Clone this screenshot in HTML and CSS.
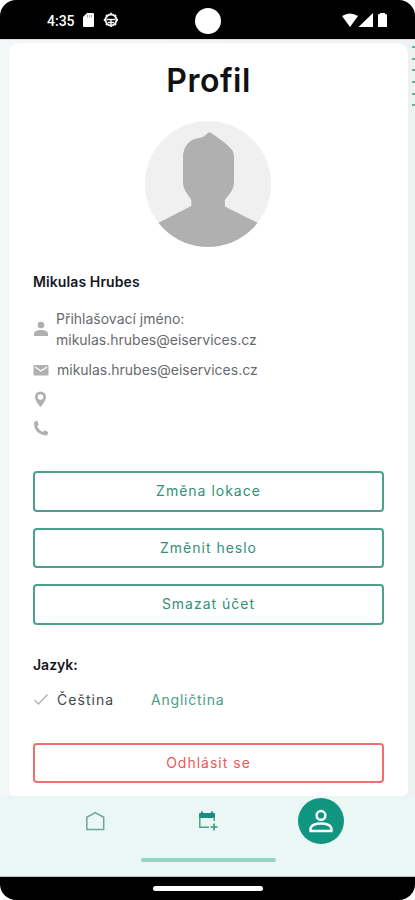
FILE: index.html
```html
<!DOCTYPE html>
<html lang="cs">
<head>
<meta charset="utf-8">
<title>Profil</title>
<link rel="stylesheet" href="styles.css">
</head>
<body>
<div class="phone">
  <header class="status">
    <div class="status-left">
      <span class="clock">4:35</span>
      <svg class="sd" viewBox="0 0 11 14"><path fill="#fff" d="M4 0h6q1 0 1 1v12q0 1-1 1H1q-1 0-1-1V4z"/><path stroke="#aaa" d="M4.500 2v2.500M6.500 2v2.500M8.500 2v2.500"/></svg>
      <svg class="debug" viewBox="0 0 16 16" fill="none" stroke="#f4f4f4"><circle cx="8" cy="8" r="5.500" stroke-width="2"/><path stroke-width="1.800" d="M8 .8v2M8 13v2M.8 8h2M13 8h2M3 3l1 1M13 3l-1 1M3 13l1-1M13 13l-1-1"/><path stroke-width="1.400" d="M4 7.500h8M8 8v5M5 10.500h6"/></svg>
    </div>
    <span class="camera"></span>
    <svg class="signals" viewBox="0 0 46 14" fill="#fff"><path d="M0 3q8-5 16 0L8 14z"/><path d="M31 0v14H16.500z"/><path d="M36 2q0-1 2-1V0h5v1q2 0 2 1v12h-9z"/></svg>
  </header>
  <main class="screen">
    <div class="dots"><i></i><i></i><i></i><i></i><i></i><i></i></div>
    <section class="card">
      <h1>Profil</h1>
      <svg class="avatar" viewBox="0 0 126 126"><defs><clipPath id="round"><circle cx="63" cy="63" r="63"/></clipPath></defs><g clip-path="url(#round)"><path fill="#f0f0f0" d="M0 0h126v126H0z"/><path fill="#b0b0b0" d="M64.300 11q3.500 2 7 4.500 9 6 15 12.500 2.700 3 2.700 7v26.500q0 5-2.700 9l-6.400 8.500v6.500L113 102v24H13v-24l33.300-17v-6l-6-9q-2.300-4-2.300-8.500V35q.5-7 4.300-12 3-3.500 7.300-5l8.400-2q3.300-2.500 6.300-5z"/></g></svg>
      <h2 class="name">Mikulas Hrubes</h2>
      <ul class="details">
        <li class="login"><svg viewBox="0 0 16 16"><circle cx="8" cy="4" r="3.300"/><path d="M1 15v-2q0-4 7-4t7 4v2z"/></svg><span><span class="label">Přihlašovací jméno:</span><br><span class="value">mikulas.hrubes@eiservices.cz</span></span></li>
        <li class="mail"><svg viewBox="0 0 16 16"><rect x=".5" y="3" width="15" height="10.500" rx="1"/><path fill="none" stroke="#fff" stroke-width="1.200" d="M2 5l6 4 6-4"/></svg><span class="value">mikulas.hrubes@eiservices.cz</span></li>
        <li><svg viewBox="0 0 16 16"><path fill-rule="evenodd" d="M7.500.500a5.500 5.500 0 0 0-5.500 5.500c0 4 5.500 10 5.500 10S13 10 13 6A5.500 5.500 0 0 0 7.500.500zm0 2.700a2.800 2.800 0 1 1 0 5.600 2.800 2.800 0 0 1 0-5.600z"/></svg></li>
        <li><svg viewBox="0 0 16 16"><path d="M1 2.500L3.300.800q1 0 1.300.700l1 2.700q0 .8-.6 1.100L4.200 6.500q2 3.700 5.600 5.400l1.100-1.100q.5-.5 1.200-.2l2.500 1.200q.7.500.5 1.200l-1 1.900q-.3.500-1 .500Q1 14 1 2.500z"/></svg></li>
      </ul>
      <div class="actions">
        <button class="lokace"><span>Změna lokace</span></button>
        <button class="heslo"><span>Změnit heslo</span></button>
        <button class="ucet"><span>Smazat účet</span></button>
      </div>
      <h2 class="lang-title">Jazyk:</h2>
      <div class="languages">
        <svg viewBox="0 0 16 16"><path fill="none" stroke="#b0b0b0" stroke-width="1.300" d="M1.500 9l4 4L14.500 3.500"/></svg>
        <span class="current">Čeština</span><a class="other">Angličtina</a>
      </div>
      <button class="logout"><span>Odhlásit se</span></button>
    </section>
  </main>
  <nav class="tabs">
    <div class="tab-row">
      <svg class="home" viewBox="0 0 20 20"><path fill="none" stroke="#6ba899" stroke-width="1.500" d="M1.800 18.500V6.300L10.200 1.500l8.500 4.800v12.200z"/></svg>
      <svg class="calendar" viewBox="0 0 20 20"><path fill="#188f78" d="M1 3q0-1 1-1h1V.500h2V2h8V.500h2V2h1q1 0 1 1v4H1z"/><path fill="none" stroke="#4ba18e" stroke-width="1.500" d="M1.800 6v10.200H11M16.200 6v4"/><path fill="none" stroke="#359883" stroke-width="1.600" d="M16 12.500v7M12.500 16h7"/></svg>
      <span class="profile"><svg viewBox="0 0 24 24" fill="none" stroke="#fff" stroke-width="2.400"><circle cx="11.500" cy="6.200" r="4.200"/><path d="M1.500 21v-2.800Q3.500 14 11.500 14t10 4.200V21z"/></svg></span>
    </div>
    <span class="scrollbar"></span>
  </nav>
  <footer class="gesture"><span></span></footer>
</div>
</body>
</html>
```

FILE: styles.css
```css
* { box-sizing: border-box; }
body { margin: 0; background: #fff; font-family: Inter, "Liberation Sans", sans-serif; }
.phone { width: 415px; height: 900px; display: flex; flex-direction: column; overflow: hidden; }
.status { height: 39px; flex: none; background: #000; border-radius: 16px 16px 0 0; display: grid; grid-template-columns: 195px 26px 1fr; color: #fff; }
.status-left { display: flex; padding: 12px 0 0 47px; }
.clock { width: 36px; font: 500 14px/18px Roboto, sans-serif; }
.sd { width: 11px; height: 14px; margin-top: 1px; }
.debug { width: 16px; height: 16px; margin-left: 9px; }
.camera { width: 26px; height: 26px; border-radius: 50%; background: #fff; margin-top: 8px; }
.signals { width: 46px; height: 14px; margin: 13px 0 0 121px; }
.screen { height: 757px; flex: none; position: relative; padding: 3px 7px 0 9px; background: linear-gradient(90deg, #f4f7f8, #edf1f1); border-top: 1px solid #ddd; }
.dots { position: absolute; right: 0; top: 6px; display: grid; gap: 9.700px; }
.dots i { width: 3px; height: 2px; background: #61b3a1; }
.card { height: 753px; background: #fff; border-radius: 10px 10px 6px 6px; padding: 19px 24px 0; display: flex; flex-direction: column; }
h1, h2, ul { margin: 0; padding: 0; }
h1 { height: 40px; font-size: 32px; line-height: 38px; font-weight: 600; text-align: center; color: #111; letter-spacing: .5px; white-space: nowrap; }
.avatar { width: 126px; height: 126px; align-self: center; margin: 19px 1px 0 0; flex: none; }
h2 { font-size: 14px; line-height: 20px; font-weight: 600; color: #16171f; white-space: nowrap; }
.name { margin-top: 25px; letter-spacing: .1px; }
.details { list-style: none; margin-top: 15px; color: #686a6e; font-size: 14px; line-height: 21px; }
.details li { height: 29px; display: flex; align-items: center; gap: 8px; white-space: nowrap; }
.details .login { height: 43px; gap: 7px; margin-bottom: 5px; }
.details svg { width: 16px; height: 16px; fill: #b0b0b0; flex: none; }
.value { letter-spacing: 0; }
.actions { margin-top: 29px; display: grid; gap: 16px; }
button { display: block; width: 351px; height: 40.500px; padding: 0; border: 2px solid #4ba18e; border-radius: 4px; background: #fff; color: #348f79; font: 400 14px/20px Inter, sans-serif; letter-spacing: 1px; text-align: center; white-space: nowrap; }
.lang-title { margin-top: 30px; }
.languages { margin-top: 14px; height: 21px; display: flex; align-items: center; font-size: 14px; line-height: 21px; letter-spacing: .8px; color: #45474a; }
.languages svg { width: 16px; height: 16px; margin-right: 8px; }
.current { width: 94px; letter-spacing: 1.050px; }
.other { color: #4c9b86; }
.logout { margin-top: 33px; border-color: #f16f70; color: #ed5757; }
.tabs { height: 81px; flex: none; background: #ebf7f4; border-bottom: 1px solid #b9c3c1; display: flex; flex-direction: column; }
.tab-row { height: 61px; display: flex; align-items: flex-start; }
.home { width: 20px; height: 20px; margin: 15px 0 0 85px; }
.calendar { width: 20px; height: 20px; margin: 15px 0 0 93px; }
.profile { width: 46px; height: 46px; margin: 2px 0 0 80px; border-radius: 50%; background: #109580; display: grid; place-items: center; }
.profile svg { width: 25px; height: 25px; }
.scrollbar { width: 135px; height: 4px; border-radius: 2px; background: #94d5c1; margin: 1px 0 0 141px; }
.gesture { height: 23px; background: #000; border-radius: 0 0 16px 16px; padding: 9px 0 0 153px; }
.gesture span { display: block; width: 110px; height: 5px; border-radius: 3px; background: #fff; }
```
